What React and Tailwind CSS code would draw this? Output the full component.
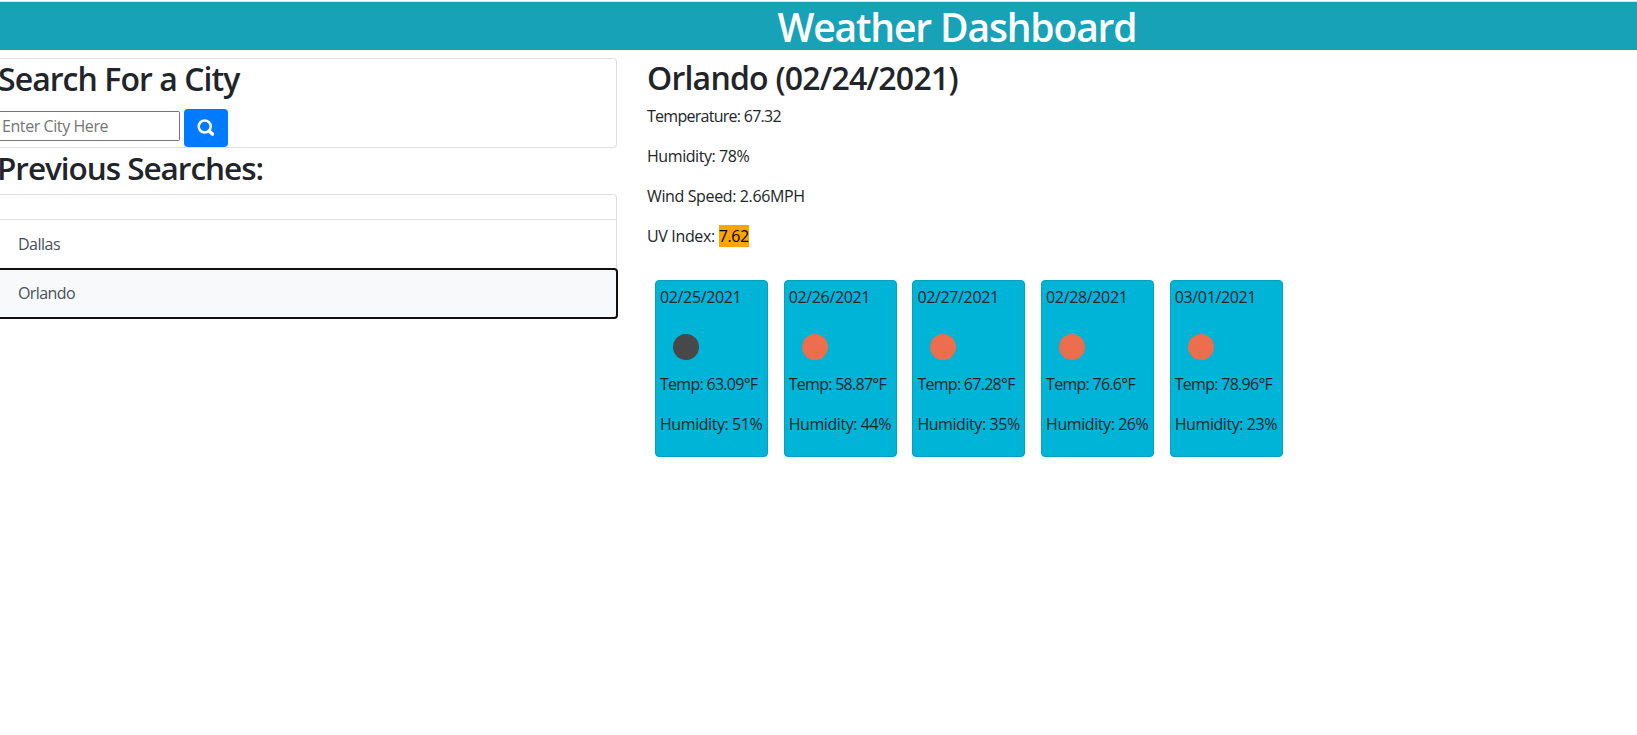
const stats = [
  { text: 'Temperature: 67.32', tracking: 'tracking-[-0.73px]' },
  { text: 'Humidity: 78%', tracking: 'tracking-[-0.43px]' },
  { text: 'Wind Speed: 2.66MPH', tracking: 'tracking-[-0.37px]' },
];

const forecast = [
  { date: '02/25/2021', temp: '63.09', humidity: 51, night: true },
  { date: '02/26/2021', temp: '58.87', humidity: 44 },
  { date: '02/27/2021', temp: '67.28', humidity: 35 },
  { date: '02/28/2021', temp: '76.6', humidity: 26 },
  { date: '03/01/2021', temp: '78.96', humidity: 23 },
];

function SearchIcon() {
  return (
    <svg className="size-[18px]" viewBox="0 0 18 18" fill="none" stroke="white">
      <circle cx="7.7" cy="7.5" r="6" strokeWidth="2.5" />
      <path d="M12.4 12.2 15.4 15" strokeWidth="3.6" strokeLinecap="round" />
    </svg>
  );
}

function ForecastCard({ day }) {
  return (
    <article className="h-[177px] w-[113px] shrink-0 rounded-[4px] border border-[#05a0b9] bg-[#00b4d8] pl-1 pt-1 whitespace-nowrap">
      <p className="h-[49px]">{day.date}</p>
      <div className={`ml-[13px] size-[26px] rounded-full ${day.night ? 'bg-[#48484a]' : 'bg-[#ec6e4c]'}`} />
      <p className="mt-[12px] mb-4 tracking-[-0.72px]">Temp: {day.temp}°F</p>
      <p className="tracking-[-0.43px]">Humidity: {day.humidity}%</p>
    </article>
  );
}

export default function App() {
  return (
    <div className="h-[735px] overflow-hidden bg-white pt-px font-['Open_Sans',sans-serif] text-base leading-6 tracking-[-0.35px] text-[#212529]">
      <header className="flex h-[49px] justify-center border-t border-[#dee2e6] bg-[#17a2b8] pt-px pl-[277px] text-white">
        <h1 className="text-[39px] leading-[48px] font-semibold tracking-[-1.15px]">Weather Dashboard</h1>
      </header>
      <main className="flex pt-2">
        <section className="w-[617px] shrink-0">
          <div className="h-[90px] rounded-r-[4px] border border-l-0 border-[#dfdfdf]">
            <h2 className="-ml-0.5 pt-px text-[32px] leading-[38px] font-semibold tracking-[-0.95px]">Search For a City</h2>
            <div className="mt-[11px] flex items-start">
              <input
                className="mt-[2px] h-[30px] w-[180px] rounded-r-[2px] border border-l-0 border-[#767676] pl-[2px] tracking-[-0.42px] placeholder:text-[#757575]"
                placeholder="Enter City Here"
              />
              <button className="ml-1 flex h-[38px] w-11 items-center justify-center rounded-[4px] bg-[#007bff]">
                <SearchIcon />
              </button>
            </div>
          </div>
          <h2 className="-ml-[3px] mb-[7px] pt-px text-[31.5px] leading-[38px] font-semibold tracking-[-1.03px]">Previous Searches:</h2>
          <div className="h-[26px] rounded-tr-[4px] border border-l-0 border-[#dfdfdf]" />
          <div className="h-12 border-r border-[#dfdfdf] pt-3 pl-[18px] tracking-[-0.5px] text-[#495057]">Dallas</div>
          <div className="h-[51px] w-[618px] rounded-r-[4px] border-2 border-l-0 border-[#101010] bg-[#f8f9fa] pt-[11px] pl-[18px] tracking-[-0.6px] text-[#495057]">
            Orlando
          </div>
        </section>
        <section className="pl-[30px]">
          <h2 className="mb-[7px] pt-px text-[32px] leading-[38px] font-semibold tracking-[-0.77px]">Orlando (02/24/2021)</h2>
          {stats.map((stat) => (
            <p key={stat.text} className={`mb-4 ${stat.tracking}`}>{stat.text}</p>
          ))}
          <p>
            UV Index: <span className="bg-[#ffa500] text-black">7.62</span>
          </p>
          <div className="mt-8 ml-2 flex gap-[15.7px]">
            {forecast.map((day) => (
              <ForecastCard key={day.date} day={day} />
            ))}
          </div>
        </section>
      </main>
    </div>
  );
}
